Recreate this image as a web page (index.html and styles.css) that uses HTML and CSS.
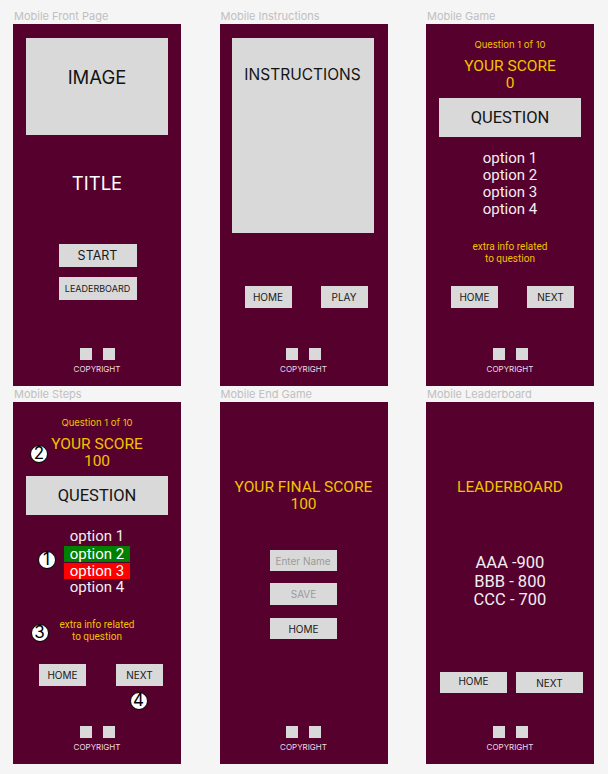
FILE: index.html
```html
<!DOCTYPE html>
<html lang="en">
<head>
<meta charset="utf-8">
<title>Mobile Wireframes</title>
<link rel="stylesheet" href="styles.css">
</head>
<body>
<div class="board">

  <section class="frame">
    <div class="label">Mobile Front Page</div>
    <div class="panel">
      <div class="box image-box">IMAGE</div>
      <div class="title">TITLE</div>
      <div class="btn btn-start">START</div>
      <div class="btn btn-lb">LEADERBOARD</div>
      <div class="foot"><div class="squares"><span class="sq"></span><span class="sq"></span></div><div class="copy">COPYRIGHT</div></div>
    </div>
  </section>

  <section class="frame">
    <div class="label">Mobile Instructions</div>
    <div class="panel">
      <div class="box instr-box">INSTRUCTIONS</div>
      <div class="btn-row row-instr">
        <div class="btn btn-sm">HOME</div>
        <div class="btn btn-sm">PLAY</div>
      </div>
      <div class="foot"><div class="squares"><span class="sq"></span><span class="sq"></span></div><div class="copy">COPYRIGHT</div></div>
    </div>
  </section>

  <section class="frame">
    <div class="label">Mobile Game</div>
    <div class="panel">
      <div class="qnum">Question 1 of 10</div>
      <div class="score">YOUR SCORE<br>0</div>
      <div class="box qbox">QUESTION</div>
      <div class="options">
        <div class="opt"><span class="opt-text">option 1</span></div>
        <div class="opt"><span class="opt-text">option 2</span></div>
        <div class="opt"><span class="opt-text">option 3</span></div>
        <div class="opt"><span class="opt-text">option 4</span></div>
      </div>
      <div class="extra">extra info related<br>to question</div>
      <div class="btn-row row-game">
        <div class="btn btn-sm">HOME</div>
        <div class="btn btn-sm">NEXT</div>
      </div>
      <div class="foot"><div class="squares"><span class="sq"></span><span class="sq"></span></div><div class="copy">COPYRIGHT</div></div>
    </div>
  </section>

  <section class="frame">
    <div class="label">Mobile Steps</div>
    <div class="panel">
      <div class="qnum">Question 1 of 10</div>
      <div class="score">YOUR SCORE<br>100</div>
      <div class="box qbox">QUESTION</div>
      <div class="options">
        <div class="opt"><span class="opt-text">option 1</span></div>
        <div class="opt"><span class="opt-text opt-right">option 2</span></div>
        <div class="opt"><span class="opt-text opt-wrong">option 3</span></div>
        <div class="opt"><span class="opt-text">option 4</span></div>
      </div>
      <div class="extra">extra info related<br>to question</div>
      <div class="btn-row row-steps">
        <div class="btn btn-sm">HOME</div>
        <div class="btn btn-sm">NEXT</div>
      </div>
      <div class="foot"><div class="squares"><span class="sq"></span><span class="sq"></span></div><div class="copy">COPYRIGHT</div></div>
      <span class="badge badge-2">2</span>
      <span class="badge badge-1">1</span>
      <span class="badge badge-3">3</span>
      <span class="badge badge-4">4</span>
    </div>
  </section>

  <section class="frame">
    <div class="label">Mobile End Game</div>
    <div class="panel">
      <div class="final">YOUR FINAL SCORE<br>100</div>
      <div class="btn field name-field">Enter Name</div>
      <div class="btn field save-btn">SAVE</div>
      <div class="btn field home-btn">HOME</div>
      <div class="foot"><div class="squares"><span class="sq"></span><span class="sq"></span></div><div class="copy">COPYRIGHT</div></div>
    </div>
  </section>

  <section class="frame">
    <div class="label">Mobile Leaderboard</div>
    <div class="panel">
      <div class="lb-title">LEADERBOARD</div>
      <div class="lb-scores">AAA -900<br>BBB - 800<br>CCC - 700</div>
      <div class="btn-row row-lb">
        <div class="btn btn-wide btn-raised">HOME</div>
        <div class="btn btn-wide">NEXT</div>
      </div>
      <div class="foot"><div class="squares"><span class="sq"></span><span class="sq"></span></div><div class="copy">COPYRIGHT</div></div>
    </div>
  </section>

</div>
</body>
</html>
```
FILE: styles.css
```css
* { box-sizing: border-box; }

body {
  margin: 0;
  background: #f5f5f5;
  font-family: Inter, "Noto Sans", "Liberation Sans", sans-serif;
  color: #1a1a1a;
}

.board {
  display: grid;
  grid-template-columns: repeat(3, 168px);
  column-gap: 38.5px;
  padding: 8px 0 0 13px;
}

.label {
  height: 16px;
  line-height: 16px;
  font-size: 11px;
  color: #c0c0c0;
  padding-left: 1px;
  white-space: nowrap;
}

.panel {
  position: relative;
  height: 362px;
  background: #56002d;
  display: flex;
  flex-direction: column;
  align-items: center;
  text-align: center;
}

.box {
  background: #d9d9d9;
  color: #141414;
  flex: none;
}

.image-box {
  margin-top: 14px;
  width: 142px;
  height: 97px;
  padding-top: 28px;
  font-size: 18.5px;
  line-height: 22px;
}

.title {
  margin-top: 37px;
  font-size: 18.5px;
  line-height: 22px;
  color: #fff;
}

.btn {
  background: #d9d9d9;
  color: #1a1a1a;
  display: flex;
  align-items: center;
  justify-content: center;
  flex: none;
  white-space: nowrap;
}

.btn-start {
  margin-top: 50px;
  width: 78px;
  height: 23px;
  font-size: 12.5px;
  margin-left: 1px;
}

.btn-lb {
  margin-top: 10px;
  width: 78px;
  height: 23px;
  font-size: 9px;
  margin-left: 1px;
}

.instr-box {
  margin-top: 14px;
  width: 142px;
  height: 195px;
  padding-top: 27px;
  font-size: 15.5px;
  line-height: 19px;
  margin-left: -2px;
}

.btn-row {
  align-self: stretch;
  display: flex;
}

.row-instr {
  margin-top: 53px;
  padding-left: 25px;
  gap: 29px;
}

.row-game {
  margin-top: 22px;
  padding-left: 25px;
  gap: 29px;
}

.row-steps {
  margin-top: 22px;
  padding-left: 26px;
  gap: 30px;
}

.btn-sm {
  width: 47px;
  height: 22px;
  font-size: 10px;
}

.qnum {
  margin-top: 15px;
  font-size: 9.5px;
  line-height: 12px;
  color: #f2c200;
}

.score,
.final,
.lb-title,
.options,
.lb-scores,
.extra,
.qbox {
  font-family: Roboto, "Liberation Sans", sans-serif;
}

.score {
  margin-top: 7px;
  font-size: 15.5px;
  line-height: 17.3px;
  color: #f2c200;
}

.qbox {
  margin-top: 5.4px;
  width: 142px;
  height: 39px;
  line-height: 39px;
  font-size: 16.5px;
}

.options {
  margin-top: 13px;
  font-size: 15px;
  line-height: 17.1px;
  color: #f3eef1;
}

.opt { height: 17.1px; }

.opt-text {
  display: inline-block;
  line-height: 16px;
  vertical-align: top;
}

.opt-right,
.opt-wrong {
  width: 66px;
  height: 16px;
  color: #fff;
  margin-top: 0.5px;
}

.opt-right { background: #008000; }
.opt-wrong { background: #ff0000; }

.extra {
  margin-top: 23px;
  font-size: 10px;
  line-height: 11.5px;
  color: #f2c200;
}

.final,
.lb-title {
  margin-top: 76.5px;
  font-size: 15.5px;
  line-height: 17px;
  color: #f2c200;
}

.field {
  width: 67px;
  font-size: 10px;
}

.name-field {
  margin-top: 37.5px;
  height: 21px;
  color: #9a9a9a;
  margin-left: -1px;
}

.save-btn {
  margin-top: 12px;
  height: 22px;
  color: #9a9a9a;
}

.home-btn {
  margin-top: 13px;
  height: 21px;
}

.lb-scores {
  margin-top: 58.5px;
  font-size: 16.5px;
  line-height: 18.7px;
  color: #f3eef1;
}

.row-lb {
  margin-top: 62px;
  padding-left: 14px;
  gap: 9px;
}

.btn-wide {
  width: 67px;
  height: 21px;
  font-size: 10px;
}

.btn-raised { padding-bottom: 3px; }

.foot {
  margin-top: auto;
  padding-bottom: 12px;
  display: flex;
  flex-direction: column;
  align-items: center;
}

.squares {
  display: flex;
  gap: 11px;
}

.sq {
  width: 12px;
  height: 12px;
  background: #d9d9d9;
}

.copy {
  margin-top: 4px;
  font-size: 8px;
  line-height: 10px;
  color: #eadde4;
}

.badge {
  position: absolute;
  width: 18px;
  height: 18px;
  border-radius: 50%;
  background: #fff;
  border: 1.5px solid #000;
  color: #000;
  font-size: 17px;
  line-height: 15px;
  text-align: center;
}

.badge-2 { left: 17px; top: 43px; }
.badge-1 { left: 24.5px; top: 149px; }
.badge-3 { left: 17.5px; top: 221.5px; }
.badge-4 { left: 116.5px; top: 289.5px; }
```
